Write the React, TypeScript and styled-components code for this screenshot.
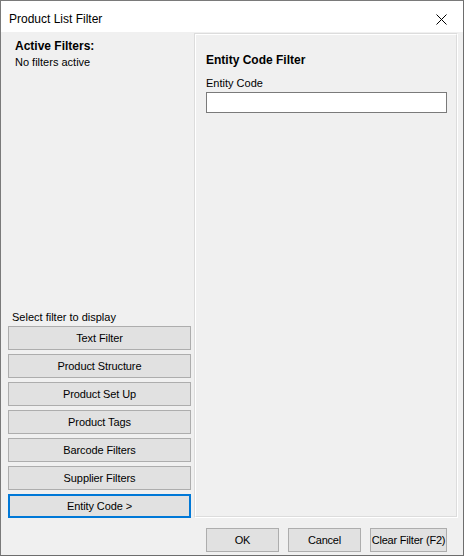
import React from "react";
import styled, { createGlobalStyle } from "styled-components";

const Global = createGlobalStyle`
  html, body { margin: 0; padding: 0; background: #ffffff; }
  body { font-family: "Liberation Sans", Arial, sans-serif; }
`;

const Window = styled.div`
  width: 464px;
  height: 556px;
  border: 1px solid #7a7a7a;
  border-right-color: #6d6d6d;
  border-bottom-color: #6d6d6d;
  background: #f0f0f0;
  display: flex;
  flex-direction: column;
  box-sizing: border-box;
`;

const TitleBar = styled.div`
  height: 31px;
  box-sizing: border-box;
  background: #ffffff;
  display: flex;
  align-items: center;
  justify-content: space-between;
  padding: 5px 12px 0 8px;
  font-size: 12px;
  color: #000;
  flex: none;
`;

const CloseIcon = styled.svg`
  width: 11px;
  height: 11px;
  margin-right: 4px;
`;

const Body = styled.div`
  flex: 1;
  display: flex;
  padding: 1px 5px 0 7px;
  min-height: 0;
`;

const LeftCol = styled.div`
  width: 183px;
  display: flex;
  flex-direction: column;
  padding-bottom: 7px;
`;

const ActiveTitle = styled.div`
  font-size: 12px;
  font-weight: bold;
  padding: 6px 0 0 7px;
  line-height: 14px;
`;

const ActiveText = styled.div`
  font-size: 11px;
  padding: 2px 0 0 7px;
  line-height: 14px;
`;

const Spacer = styled.div`
  flex: 1;
`;

const SelectLabel = styled.div`
  font-size: 11px;
  line-height: 13px;
  padding: 0 0 2px 4px;
`;

const FilterList = styled.div`
  display: flex;
  flex-direction: column;
  gap: 4px;
  margin-bottom: 30px;
`;

const FilterButton = styled.button<{ $active?: boolean }>`
  height: 24px;
  width: 183px;
  box-sizing: border-box;
  background: #e1e1e1;
  border: ${(p) => (p.$active ? "2px solid #0078d7" : "1px solid #adadad")};
  font-family: "Liberation Sans", Arial, sans-serif;
  font-size: 11px;
  letter-spacing: -0.1px;
  color: #000;
  padding: 0;
  margin: 0;
  text-align: center;
`;

const RightCol = styled.div`
  flex: 1;
  display: flex;
  flex-direction: column;
  margin-left: 3px;
`;

const Frame = styled.div`
  height: 485px;
  box-sizing: border-box;
  border: 1px solid #dcdcdc;
  border-right-color: #ffffff;
  border-bottom-color: #ffffff;
  display: flex;
`;

const FrameInner = styled.div`
  flex: 1;
  border: 1px solid #ffffff;
  border-right-color: #dcdcdc;
  border-bottom-color: #dcdcdc;
  padding: 18px 9px 0 10px;
`;

const FilterTitle = styled.div`
  font-size: 12px;
  font-weight: bold;
  line-height: 14px;
`;

const FieldLabel = styled.div`
  font-size: 11px;
  line-height: 13px;
  margin-top: 10px;
`;

const TextInput = styled.input`
  display: block;
  width: 241px;
  height: 21px;
  box-sizing: border-box;
  border: 1px solid #7a7a7a;
  background: #fff;
  margin: 2px 0 0 0;
  outline: none;
`;

const Footer = styled.div`
  display: flex;
  justify-content: flex-end;
  gap: 9px;
  padding: 10px 11px 0 0;
`;

const DialogButton = styled.button<{ $w: number }>`
  width: ${(p) => p.$w}px;
  height: 24px;
  box-sizing: border-box;
  background: #e1e1e1;
  border: 1px solid #adadad;
  font-family: "Liberation Sans", Arial, sans-serif;
  font-size: 11px;
  letter-spacing: -0.2px;
  white-space: nowrap;
  color: #000;
  padding: 0;
`;

const filters = [
  "Text Filter",
  "Product Structure",
  "Product Set Up",
  "Product Tags",
  "Barcode Filters",
  "Supplier Filters",
];

export default function App() {
  return (
    <>
      <Global />
      <Window>
        <TitleBar>
          <span>Product List Filter</span>
          <CloseIcon viewBox="0 0 11 11">
            <path d="M0.5 0.5 L10.5 10.5 M10.5 0.5 L0.5 10.5" stroke="#000" strokeWidth="1" fill="none" />
          </CloseIcon>
        </TitleBar>
        <Body>
          <LeftCol>
            <ActiveTitle>Active Filters:</ActiveTitle>
            <ActiveText>No filters active</ActiveText>
            <Spacer />
            <SelectLabel>Select filter to display</SelectLabel>
            <FilterList>
              {filters.map((f) => (
                <FilterButton key={f}>{f}</FilterButton>
              ))}
              <FilterButton $active>Entity Code &gt;</FilterButton>
            </FilterList>
          </LeftCol>
          <RightCol>
            <Frame>
              <FrameInner>
                <FilterTitle>Entity Code Filter</FilterTitle>
                <FieldLabel>Entity Code</FieldLabel>
                <TextInput />
              </FrameInner>
            </Frame>
            <Footer>
              <DialogButton $w={73}>OK</DialogButton>
              <DialogButton $w={73}>Cancel</DialogButton>
              <DialogButton $w={77}>Clear Filter (F2)</DialogButton>
            </Footer>
          </RightCol>
        </Body>
      </Window>
    </>
  );
}
